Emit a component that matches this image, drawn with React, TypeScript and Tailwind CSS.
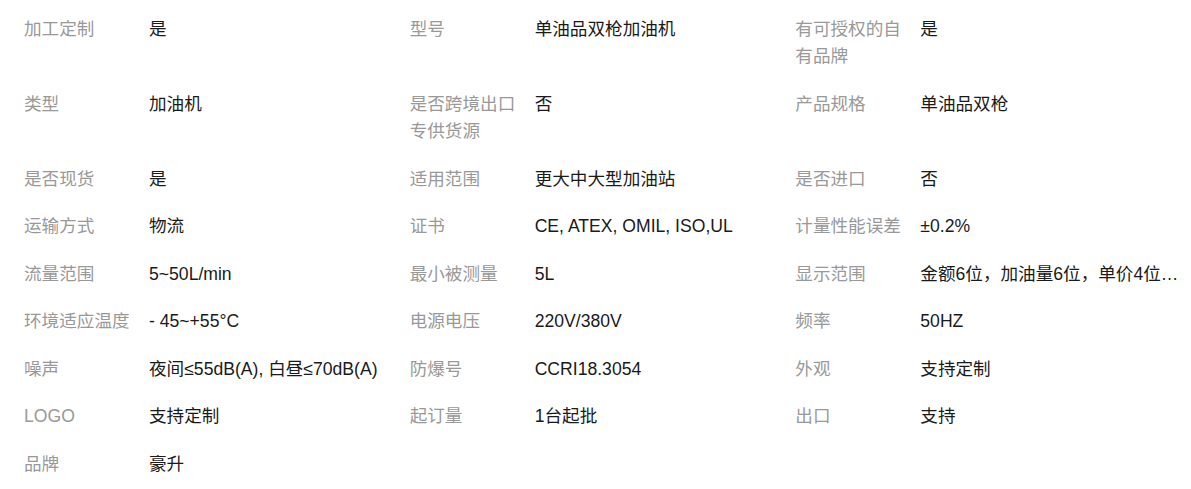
const rows: [string, string][][] = [
  [["加工定制", "是"], ["型号", "单油品双枪加油机"], ["有可授权的自有品牌", "是"]],
  [["类型", "加油机"], ["是否跨境出口专供货源", "否"], ["产品规格", "单油品双枪"]],
  [["是否现货", "是"], ["适用范围", "更大中大型加油站"], ["是否进口", "否"]],
  [["运输方式", "物流"], ["证书", "CE, ATEX, OMIL, ISO,UL"], ["计量性能误差", "±0.2%"]],
  [["流量范围", "5~50L/min"], ["最小被测量", "5L"], ["显示范围", "金额6位，加油量6位，单价4位，累计12位"]],
  [["环境适应温度", "- 45~+55°C"], ["电源电压", "220V/380V"], ["频率", "50HZ"]],
  [["噪声", "夜间≤55dB(A), 白昼≤70dB(A)"], ["防爆号", "CCRI18.3054"], ["外观", "支持定制"]],
  [["LOGO", "支持定制"], ["起订量", "1台起批"], ["出口", "支持"]],
  [["品牌", "豪升"]],
];

function Attr({ label, value }: { label: string; value: string }) {
  return (
    <div className="flex py-[10px] leading-[27.5px]">
      <div className="w-[125px] shrink-0 pr-[12px] text-[#999999]">{label}</div>
      <div className="min-w-0 flex-1 truncate text-[#1a1a1a]">{value}</div>
    </div>
  );
}

export default function App() {
  return (
    <div
      className="bg-white pl-[24px] pr-[10px] pt-[5.5px] text-[17.6px]"
      style={{ fontFamily: '"Liberation Sans", "Noto Sans CJK SC", sans-serif' }}
    >
      <div className="grid grid-cols-3">
        {rows.map((row, i) =>
          [0, 1, 2].map((j) =>
            row[j] ? (
              <Attr key={`${i}-${j}`} label={row[j][0]} value={row[j][1]} />
            ) : (
              <div key={`${i}-${j}`} />
            )
          )
        )}
      </div>
    </div>
  );
}
